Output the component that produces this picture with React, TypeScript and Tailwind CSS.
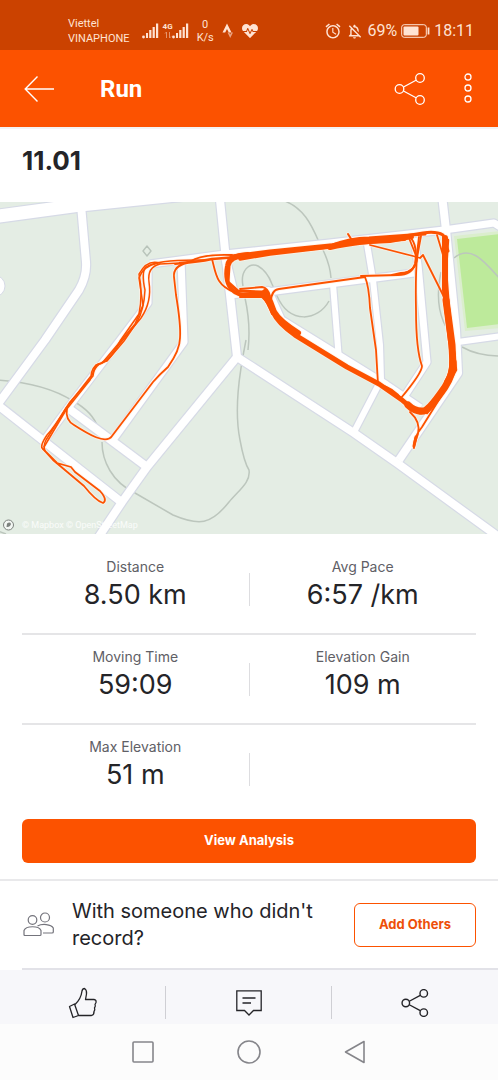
import React, { useState } from "react";
import { FaHeartbeat } from "react-icons/fa";
import { MdAlarm, MdOutlineNotificationsOff } from "react-icons/md";

const stats = [
  [
    { label: "Distance", value: "8.50 km" },
    { label: "Avg Pace", value: "6:57 /km" },
  ],
  [
    { label: "Moving Time", value: "59:09" },
    { label: "Elevation Gain", value: "109 m" },
  ],
  [{ label: "Max Elevation", value: "51 m" }],
];

const roads = [
  { d: "M81 205 L86 262 Q87 276 79 290 L45 340 L-2 404", w: 8 },
  { d: "M-6 402 L120 501", w: 8 },
  { d: "M237 357 L147 467 L122 502 L98 538", w: 8 },
  { d: "M219 190 L225 250 L234 330 L237 357", w: 8 },
  { d: "M237 357 L354 433 L397 463 L500 538", w: 8 },
  { d: "M150 264 L225 254 L330 243 L444 230 L494 223 L502 228", w: 7 },
  { d: "M442 195 L446 230 L456 330 L458 373 L399 460", w: 8 },
  { d: "M458 342 L502 336", w: 6 },
  { d: "M148 266 L148 303 L120 340 L68 408 L43 442", w: 7 },
  { d: "M181 260 L184 342 L113 440", w: 7 },
  { d: "M68 408 L147 467", w: 8 },
  { d: "M268 292 L414 273", w: 7 },
  { d: "M333 284 L339 360", w: 6 },
  { d: "M367 244 L373 280 L380 345 L381 380 L354 432", w: 6 },
  { d: "M414 238 L418 265 L427 362 L404 397", w: 7 },
  { d: "M225 256 L234 294 L268 291 L281 320 L386 385 L420 408", w: 8 },
  { d: "M-8 217 L80 205 L215 191", w: 13 },
];

const trails = [
  "M282 200 C304 207 312 226 319 242 Q330 262 331 278",
  "M248 350 Q251 325 245 298 M243 286 C240 271 249 262 258 266 Q267 271 272 284 L277 296 C290 325 318 321 329 301",
  "M246 340 C239 375 234 410 240 440 Q244 462 249 470 C251 482 239 490 229 502 C211 525 199 526 173 515 L135 493 C112 482 102 461 102 442",
  "M-2 380 Q45 383 73 401 Q93 412 98 428",
  "M454 258 C469 245 482 258 500 279",
  "M462 347 Q478 356 500 356",
  "M441 272 Q434 305 446 327",
  "M-2 531 L6 534",
];

const track = [
  { d: "M160 263 Q147 259 139 274 Q143 294 139 314 L120 341 Q109 361 98 364 Q92 367 91 376 L66 408 Q54 428 47 435 Q39 447 43 449", w: 1.5 },
  { d: "M205 260 Q158 259 146 267 Q141 272 145 290 Q144 310 137 322 L124 341 L107 361 Q94 364 93 376 L70 402 L46 440 Q43 446 45 451", w: 1.5 },
  { d: "M180 263 L160 264 Q147 267 149 282 Q152 302 141 318 L118 346 Q108 364 96 365 L90 380 L66 410 L44 447", w: 1.5 },
  { d: "M158 263 Q143 266 139 278 L143 305 L135 324 L103 362", w: 1.5 },
  { d: "M43 449 L53 460 L84 486 Q96 501 103 503 Q108 500 100 491 L75 472 L71 467 L57 463 Z", w: 1.8 },
  { d: "M67 408 Q65 420 74 425 C88 434 106 445 112 436 L153 382 Q160 374 168 367 Q180 350 180 338 Q181 325 176 295 L174 277 Q173 266 187 263", w: 1.8 },
  { d: "M175 264 Q188 264 195 259 Q208 254 232 255", w: 1.8 },
  { d: "M180 263 Q198 262 212 259 L250 256", w: 2.4 },
  { d: "M212 259 C216 274 216 285 234 292", w: 1.8 },
  { d: "M248 254 Q228 255 227 266 C224 282 230 293 243 295 L265 294", w: 4 },
  { d: "M244 257 Q231 257 229 266 L228 282 L238 291 L262 292", w: 3 },
  { d: "M240 289 L262 287 Q268 288 270 296", w: 1.8 },
  { d: "M240 297 L262 297 Q268 302 272 314", w: 2 },
  { d: "M232 257 L270 252 L330 246", w: 5 },
  { d: "M240 259 L270 254 L330 247", w: 3.5 },
  { d: "M263 294 Q269 302 273 312 Q278 323 295 335 L347 367 L379 384 L402 400 Q413 410 420 412", w: 5 },
  { d: "M265 292 Q271 302 274 312 Q279 321 298 333", w: 6 },
  { d: "M330 246 Q350 238 369 238 L425 234", w: 3 },
  { d: "M330 247 Q355 241 404 238", w: 6 },
  { d: "M350 243 L390 241 L412 237", w: 4 },
  { d: "M348 234 L353 242", w: 2 },
  { d: "M405 236 L423 233 Q436 231 443 235 L448 251", w: 3 },
  { d: "M445 238 L445 290 L452 350 Q454 372 447 382", w: 6 },
  { d: "M448 240 L446 270 L449 310 L456 370 L445 390 L427 413", w: 2.5 },
  { d: "M446 300 L452 345 L453 366", w: 7 },
  { d: "M437 235 L443 255 L444 300 L450 345", w: 1.8 },
  { d: "M453 362 Q453 375 445 387 Q430 409 424 411 Q415 412 408 405", w: 7 },
  { d: "M370 245 L413 256 L420 258 L423 255 L444 297", w: 1.8 },
  { d: "M411 238 Q418 247 415 264 Q412 275 398 275 L361 276", w: 2 },
  { d: "M409 238 L417 258 Q416 272 401 273 L392 275", w: 1.8 },
  { d: "M421 236 Q418 252 416 264 Q410 274 398 274", w: 1.8 },
  { d: "M419 237 Q415 265 416 310 Q416 350 422 366 Q422 373 401 398", w: 1.8 },
  { d: "M271 302 Q271 290 279 289 L365 277 Q369 286 370 308 L376 350 L378 384", w: 1.8 },
  { d: "M380 385 Q394 388 402 400", w: 1.8 },
  { d: "M410 412 Q421 422 418 434 Q413 448 414 448 Q413 438 422 427 L445 390", w: 1.8 },
  { d: "M414 446 L416 437", w: 3 },
];

const RouteMap = () => (
  <svg
    viewBox="0 202 498 332"
    className="block w-full"
    fill="none"
    strokeLinejoin="round"
    role="img"
    aria-label="Route map"
  >
    <rect x="0" y="202" width="498" height="332" fill="#e4ede4" />
    <path d="M454 236 L500 231 L500 328 L465 331 Z" fill="#dbeecd" />
    <path d="M457 239 L500 234 L500 324 L467 328 Z" fill="#bdea9b" />
    {trails.map((d) => (
      <path key={d} d={d} stroke="#bcc6bd" strokeWidth="1.5" />
    ))}
    <circle cx="-6" cy="286" r="11" fill="#fff" stroke="#d6dae6" />
    {roads.map((road) => (
      <path key={road.d} d={road.d} stroke="#d6dae6" strokeWidth={road.w + 2.4} />
    ))}
    {roads.map((road) => (
      <path key={road.d} d={road.d} stroke="#fff" strokeWidth={road.w} />
    ))}
    <path d="M147 246 L151 251 L147 256 L143 251 Z" stroke="#b9c4bb" strokeWidth="1.4" />
    <g strokeLinecap="round">
      {track.map((line) => (
        <path key={line.d} d={line.d} stroke="#fff1e8" strokeOpacity="0.6" strokeWidth={line.w + 2} />
      ))}
      {track.map((line) => (
        <path key={line.d} d={line.d} stroke="#fc5200" strokeWidth={line.w} />
      ))}
    </g>
    <circle cx="8.500" cy="525" r="5" fill="#f4f7f4" stroke="#7d827e" strokeWidth="1" />
    <path d="M6.500 527 L7 523.500 Q10 521.500 11 524 Q10 527.500 6.500 527 Z" fill="#7d827e" />
  </svg>
);

const ShareIcon = ({ className }: { className: string }) => (
  <svg viewBox="0 0 32 32" className={className} fill="none" stroke="currentColor">
    <circle cx="5.500" cy="16" r="4.300" />
    <circle cx="26" cy="5" r="4.300" />
    <circle cx="26" cy="27" r="4.300" />
    <path d="M9.500 14 L22 7.200 M9.500 18 L22 24.800" />
  </svg>
);

const SignalIcon = () => (
  <svg viewBox="0 0 17 16" className="h-4 w-[17px]" fill="currentColor">
    <circle cx="1.500" cy="14" r="1.400" />
    <rect x="4" y="10" width="2" height="5" />
    <rect x="7.200" y="7" width="2.200" height="8" />
    <rect x="10.600" y="4" width="2.200" height="11" />
    <rect x="14" y="0.500" width="2.200" height="14.500" />
  </svg>
);

const App = () => {
  const [liked, setLiked] = useState(false);

  return (
    <div className="min-h-screen flex flex-col bg-white font-['Inter',sans-serif] text-[#242428]">
      <div className="bg-[#cb4200] text-[#ffe3d3] h-[50px] pl-[68px] pr-6 pt-3 flex items-center justify-between font-['Roboto',sans-serif]">
        <div className="flex items-center">
          <div className="text-[11px] leading-[15px]">
            <div>Viettel</div>
            <div>VINAPHONE</div>
          </div>
          <div className="ml-3">
            <SignalIcon />
          </div>
          <div className="ml-1 flex items-end">
            <div className="flex flex-col items-center">
              <span className="text-[8px] leading-2 font-bold">4G</span>
              <svg viewBox="0 0 8 8" className="h-2 w-2 opacity-50" fill="none" stroke="currentColor">
                <path d="M2.500 7 V1 L1 2.500 M5.500 1 V7 L7 5.500" />
              </svg>
            </div>
            <div className="-ml-px">
              <SignalIcon />
            </div>
          </div>
          <div className="ml-2 text-[11px] leading-[13px] text-center">
            <div>0</div>
            <div>K/s</div>
          </div>
          <svg viewBox="0 0 12 16" className="ml-2 h-4 w-3" fill="currentColor">
            <path d="M5 0.500 L9.500 9.500 H6.800 L5 6 L3.200 9.500 H0.500 Z" />
            <path d="M5.500 9.500 H7.200 L8.200 11.500 L9.200 9.500 H11 L8.200 15 Z" opacity="0.6" />
          </svg>
          <FaHeartbeat className="ml-2 h-4 w-4" />
        </div>
        <div className="flex items-center">
          <MdAlarm className="h-[18px] w-[18px]" />
          <MdOutlineNotificationsOff className="ml-1 h-[17px] w-[17px]" />
          <span className="ml-1 text-base leading-5">69%</span>
          <svg viewBox="0 0 29 14" className="ml-1 h-[14px] w-[29px]" fill="none" stroke="currentColor">
            <rect x="0.700" y="0.700" width="24.600" height="12.600" rx="2.500" />
            <rect x="2.500" y="2.500" width="15" height="9" rx="1" fill="currentColor" stroke="none" />
            <path d="M27.500 3.500 V10.500" strokeWidth="1.800" />
          </svg>
          <span className="ml-1 text-base leading-5">18:11</span>
        </div>
      </div>

      <header className="bg-[#fc5200] text-white h-[77px] pl-6 pr-[22px] flex items-center">
        <button type="button" aria-label="Back">
          <svg viewBox="0 0 30 26" className="h-[26px] w-[30px]" fill="none" stroke="currentColor" strokeWidth="1.4">
            <path d="M30 13 H1.500 M13.500 0.500 L1.200 13 L13.500 25.500" />
          </svg>
        </button>
        <h1 className="ml-[46px] flex-1 text-2xl font-bold font-['Roboto',sans-serif]">Run</h1>
        <button type="button" aria-label="Share">
          <ShareIcon className="h-8 w-8 stroke-[1.3]" />
        </button>
        <button type="button" aria-label="More options" className="ml-[34px]">
          <svg viewBox="0 0 16 32" className="h-8 w-4" fill="none" stroke="currentColor" strokeWidth="1.3">
            <circle cx="8" cy="4" r="3" />
            <circle cx="8" cy="15" r="3" />
            <circle cx="8" cy="26" r="3" />
          </svg>
        </button>
      </header>

      <div className="h-[75px] px-[22px] pt-4 border-t-2 border-[#f3f3f3]">
        <h2 className="text-[26px] leading-8 font-bold">11.01</h2>
      </div>

      <div className="relative">
        <RouteMap />
        <p className="absolute bottom-0 left-[22px] text-[9px] leading-[18px] text-white/80 font-['Roboto',sans-serif]">
          © Mapbox © OpenStreetMap
        </p>
      </div>

      <div className="px-[22px] pt-[11px]">
        {stats.map((row) => (
          <div
            key={row[0].label}
            className="h-[90px] pt-3 grid grid-cols-[1fr_1px_1fr] text-center border-b-2 border-[#e5e5e7] last:border-b-0"
          >
            <div>
              <div className="text-sm leading-5 text-[#606066]">{row[0].label}</div>
              <div className="text-[27px] leading-9">{row[0].value}</div>
            </div>
            <div className="mt-4 h-[33px] bg-[#dddde0]" />
            {row[1] && (
              <div>
                <div className="text-sm leading-5 text-[#606066]">{row[1].label}</div>
                <div className="text-[27px] leading-9">{row[1].value}</div>
              </div>
            )}
          </div>
        ))}
      </div>

      <div className="px-[22px] pt-1 pb-4 border-b-2 border-[#e9e9eb]">
        <button
          type="button"
          className="w-full h-11 rounded-md bg-[#fc5200] text-white text-[13px] font-bold"
        >
          View Analysis
        </button>
      </div>

      <div className="ml-[22px] pr-[22px] h-[89px] flex items-center border-b-2 border-[#e2e2e8]">
        <svg viewBox="0 0 32 26" className="h-[26px] w-8 shrink-0" fill="none" stroke="#74747c" strokeWidth="1.2">
          <circle cx="10.500" cy="8" r="4.300" />
          <circle cx="23" cy="5.500" r="4.500" />
          <path d="M2 22.500 V18.500 C4 13.500 17 13.500 19 18.500 V22.500 Q19 23.500 18 23.500 H3 Q2 23.500 2 22.500 Z" />
          <path d="M15.500 14 C20 11.500 29 12 31.300 16 V20 Q31.300 21 30 21 H21" />
        </svg>
        <p className="ml-[18px] flex-1 text-xl leading-[27px]">
          With someone who didn't record?
        </p>
        <button
          type="button"
          className="ml-4 w-[122px] h-11 shrink-0 rounded-md border border-[#fc5200] text-[#ee4f09] text-[13px] font-bold"
        >
          Add Others
        </button>
      </div>

      <div className="bg-[#f7f7fa] h-[54px] pt-4 grid grid-cols-3 items-start">
        <button
          type="button"
          aria-label="Give kudos"
          aria-pressed={liked}
          onClick={() => setLiked(!liked)}
          className="h-[33px] flex items-center justify-center border-r border-[#cfcfd4]"
        >
          <svg viewBox="0 0 30 32" className="h-8 w-[30px]" fill="none" stroke="currentColor" strokeWidth="1.3" strokeLinejoin="round">
            <path d="M1.500 19.500 L6.500 17 L10.500 28.500 L5 30.500 Z" />
            <path d="M7 17.500 Q13 12 14 4 Q14.500 1.500 16.500 1.500 Q19 3 18.500 7 L17.500 12.500 H26 Q28.500 13 28 15.500 L27 17.500 Q28 19 26.500 21 Q27.300 23 26 24.500 Q26.300 27.500 23.500 28.500 H10.500" />
          </svg>
        </button>
        <button
          type="button"
          aria-label="Comments"
          className="h-[33px] flex items-center justify-center border-r border-[#cfcfd4]"
        >
          <svg viewBox="0 0 26 26" className="h-[26px] w-[26px]" fill="none" stroke="currentColor" strokeWidth="1.3">
            <path d="M0.800 0.800 H25.200 V20.500 H17.500 L13 25 L8.500 20.500 H0.800 Z M6.500 8 H19.500 M6.500 13 H15" />
          </svg>
        </button>
        <button type="button" aria-label="Share activity" className="h-[33px] flex items-center justify-center">
          <ShareIcon className="h-7 w-7 stroke-[1.6]" />
        </button>
      </div>

      <nav className="flex-1 min-h-14 bg-[#fcfcfc] px-[90px] grid grid-cols-3 items-center justify-items-center text-[#85858a]">
        <button type="button" aria-label="Recent apps">
          <svg viewBox="0 0 24 24" className="h-6 w-6" fill="none" stroke="currentColor" strokeWidth="1.6">
            <rect x="2" y="2" width="20" height="20" rx="1" />
          </svg>
        </button>
        <button type="button" aria-label="Home">
          <svg viewBox="0 0 24 24" className="h-6 w-6" fill="none" stroke="currentColor" strokeWidth="1.6">
            <circle cx="12" cy="12" r="11" />
          </svg>
        </button>
        <button type="button" aria-label="Previous screen">
          <svg viewBox="0 0 24 24" className="h-6 w-6" fill="none" stroke="currentColor" strokeWidth="1.6" strokeLinejoin="round">
            <path d="M21 1.500 V22.500 L2.500 12 Z" />
          </svg>
        </button>
      </nav>
    </div>
  );
};

export default App;
